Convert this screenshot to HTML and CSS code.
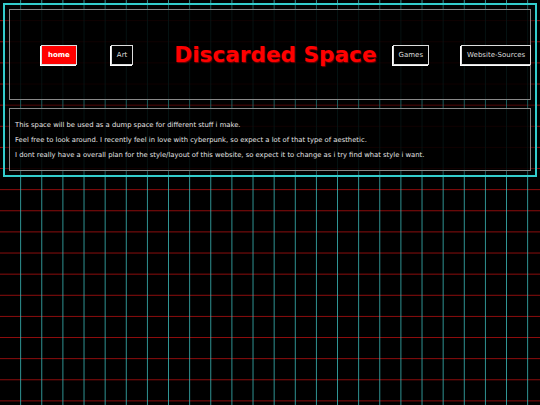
FILE: index.html
```html
<!DOCTYPE html>
<html>
<head>
	<meta charset="utf-8">
	<title>Discarded Space</title>
	<link rel="stylesheet" href="styles.css">
</head>
<body>
	<div class="frame">
		<div class="header">
			<a class="navbtn current" href="#">home</a>
			<a class="navbtn art" href="#">Art</a>
			<h1 class="title">Discarded Space</h1>
			<a class="navbtn games" href="#">Games</a>
			<a class="navbtn sources" href="#">Website-Sources</a>
		</div>
		<div class="content">
			<p>This space will be used as a dump space for different stuff i make.</p>
			<p>Feel free to look around. I recently feel in love with cyberpunk, so expect a lot of that type of aesthetic.</p>
			<p>I dont really have a overall plan for the style/layout of this website, so expect it to change as i try find what style i want.</p>
		</div>
	</div>
</body>
</html>
```

FILE: styles.css
```css
html, body {
	margin: 0;
	padding: 0;
	min-height: 100vh;
}
body {
	background-color: #000;
	background-image:
		linear-gradient(to right, transparent calc(100% - 1px), rgba(60, 190, 190, 0.8) calc(100% - 1px)),
		linear-gradient(to bottom, transparent calc(100% - 1px), rgba(170, 15, 15, 0.85) calc(100% - 1px));
	background-size: 21.125px 21.125px;
	font-family: "DejaVu Sans", Verdana, sans-serif;
	color: #ddd;
	padding: 3px;
	box-sizing: border-box;
}
.frame {
	border: 2px solid #3cc;
	padding: 4px;
	background-color: rgba(0, 0, 0, 0.4);
}
.header {
	display: flex;
	align-items: center;
	height: 89px;
	border: 1px solid #888;
	background-color: rgba(0, 0, 0, 0.8);
	padding-left: 31px;
	white-space: nowrap;
}
.content {
	margin-top: 8px;
	border: 1px solid #888;
	background-color: rgba(0, 0, 0, 0.8);
	padding: 12px 5px 11px 5px;
	font-size: 6.8px;
	color: #e4e4e4;
}
.content p {
	margin: 0 0 7px 0;
	line-height: 8px;
}
.content p:last-child {
	margin-bottom: 0;
}
.navbtn {
	flex-shrink: 0;
	display: inline-block;
	text-decoration: none;
	color: #ddd;
	font-size: 7px;
	line-height: 18px;
	padding: 0 5px;
	border: 1px solid #ddd;
	box-shadow: -1px 1px 0 #fff;
	background-color: #000;
}
.navbtn.current {
	background-color: #f00;
	color: #fff;
	font-weight: bold;
	padding: 0 6px;
}
.art {
	margin-left: 34px;
}
.title {
	flex-shrink: 0;
	margin: 0 0 0 41px;
	font-size: 21.6px;
	font-weight: bold;
	color: #f00;
	text-shadow: 1px 1px 1px #700;
}
.games {
	margin-left: 16px;
}
.sources {
	margin-left: 32px;
}
```
